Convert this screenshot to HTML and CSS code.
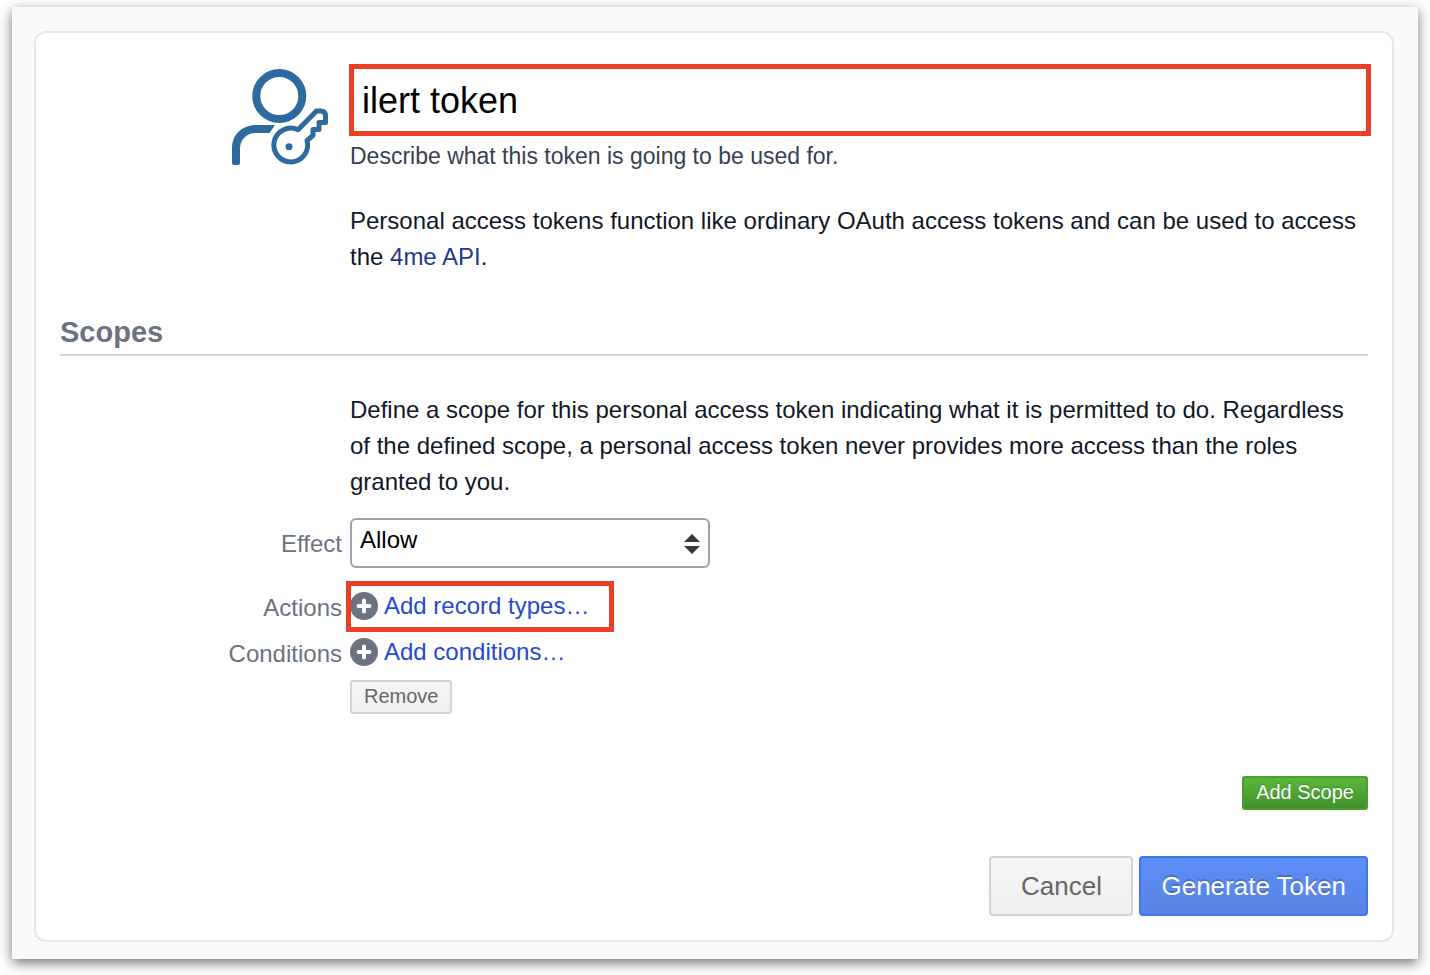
FILE: index.html
```html
<!DOCTYPE html>
<html lang="en">
<head>
<meta charset="utf-8">
<title>Personal access token</title>
<link rel="stylesheet" href="styles.css">
</head>
<body>
<main class="window">
  <form class="card">
    <section class="form-grid intro">
      <svg class="token-icon" viewBox="0 0 98 98" fill="none" stroke="#2d6aa0" aria-hidden="true">
        <circle cx="47.300" cy="28" r="23" stroke-width="8"/>
        <path d="M0 95V80C0 66 11 57 24 57H43L37.500 65H24C14 65 8 72 8 81V95Q8 97 6 97H2Q0 97 0 95Z" fill="#2d6aa0" stroke="none"/>
        <path d="M66 61.800L84.500 43H88.500Q93.500 43 93.500 48V54.500H87V61.500H81V67.500L75 72.500A16.900 16.900 0 1 1 66 61.800Z" stroke-width="5" stroke-linejoin="round"/>
        <circle cx="57" cy="78.700" r="3.500" fill="#2d6aa0" stroke="none"/>
      </svg>
      <div class="field">
        <input class="title-input" type="text" value="ilert token" aria-label="Token description" aria-describedby="token-hint">
        <p class="hint" id="token-hint">Describe what this token is going to be used for.</p>
        <p>Personal access tokens function like ordinary OAuth access tokens and can be used to access the <a class="api-link" href="#">4me API</a>.</p>
      </div>
    </section>
    <h2 class="section-title">Scopes</h2>
    <section class="form-grid">
      <p class="field scope-text">Define a scope for this personal access token indicating what it is permitted to do. Regardless of the defined scope, a personal access token never provides more access than the roles granted to you.</p>
      <label class="label effect-label" for="effect">Effect</label>
      <div class="select-wrap">
        <select class="select" id="effect"><option>Allow</option></select>
        <svg class="select-arrows" viewBox="0 0 16 20" fill="#343a40" aria-hidden="true"><path d="M8 0L16 8H0ZM0 12H16L8 20Z"/></svg>
      </div>
      <span class="label actions-label">Actions</span>
      <a class="add-link highlighted" href="#">
        <svg class="plus" viewBox="0 0 28 28" aria-hidden="true"><circle cx="14" cy="14" r="14" fill="#6b7280"/><path d="M14 8.500V19.500M8.500 14H19.500" stroke="#fff" stroke-width="4" stroke-linecap="round"/></svg>
        Add record types…
      </a>
      <span class="label conditions-label">Conditions</span>
      <a class="add-link" href="#">
        <svg class="plus" viewBox="0 0 28 28" aria-hidden="true"><circle cx="14" cy="14" r="14" fill="#6b7280"/><path d="M14 8.500V19.500M8.500 14H19.500" stroke="#fff" stroke-width="4" stroke-linecap="round"/></svg>
        Add conditions…
      </a>
      <button class="button small remove" type="button">Remove</button>
    </section>
    <div class="scope-actions"><button class="button small green" type="button">Add Scope</button></div>
    <footer class="form-actions">
      <button class="button large" type="button">Cancel</button>
      <button class="button large blue" type="button">Generate Token</button>
    </footer>
  </form>
</main>
</body>
</html>
```
FILE: styles.css
```css
* { box-sizing: border-box; }
body {
  margin: 0;
  padding: 7px 12px 16px;
  background: #fff;
  color: #111827;
  font: 24px/36px "Liberation Sans", Arial, sans-serif;
}
p, h2 { margin: 0; }
a { text-decoration: none; }
.window {
  padding: 24px 24px 17px 22px;
  background: #f9fafc;
  box-shadow: 0 4px 12px rgba(0, 0, 0, .55);
}
.card {
  padding: 31px 24px 24px;
  background: #fff;
  border: 2px solid #e5e7eb;
  border-radius: 12px;
}
.form-grid {
  display: grid;
  grid-template-columns: 282px minmax(0, 1fr);
  column-gap: 8px;
}
.field { grid-column: 2; }
.token-icon {
  width: 98px;
  height: 98px;
  margin-top: 4px;
  margin-right: 12px;
  justify-self: end;
}
.title-input {
  display: block;
  width: calc(100% + 4px);
  height: 72px;
  margin: 0 -3px 0 -1px;
  padding: 2px 8px 0;
  border: 5px solid #ea4027;
  background: #fff;
  color: #000;
  font: inherit;
  font-size: 36px;
}
.hint {
  margin: 2px 0 29px;
  color: #374151;
  font-size: 23px;
}
.api-link { color: #233a8b; }
.section-title {
  margin: 36px 0;
  padding: 2px 0;
  border-bottom: 2px solid #d1d5db;
  color: #6b7280;
  font-size: 29px;
  line-height: 39px;
}
.scope-text { margin-bottom: 18px; }
.label {
  color: #6b7280;
  text-align: right;
}
.effect-label { padding-top: 8px; }
.select-wrap {
  position: relative;
  width: 360px;
  height: 50px;
  margin-bottom: 13px;
}
.select {
  width: 100%;
  height: 100%;
  padding: 0 40px 6px 8px;
  appearance: none;
  border: 2px solid #9ca3af;
  border-radius: 6px;
  background: #fff;
  color: #000;
  font: inherit;
}
.select-arrows {
  position: absolute;
  top: 16px;
  right: 10px;
  width: 16px;
  height: 20px;
  pointer-events: none;
}
.actions-label { padding-top: 9px; }
.conditions-label { padding-top: 4px; }
.add-link {
  display: flex;
  align-items: center;
  gap: 6px;
  justify-self: start;
  height: 40px;
  color: #2549d0;
}
.highlighted {
  width: 268px;
  height: 51px;
  margin-left: -4px;
  padding: 0 4px 1px;
  outline: 5px solid #ea4027;
  outline-offset: -5px;
}
.plus {
  width: 28px;
  height: 28px;
  flex: none;
}
.button {
  border: 2px solid #d4d4d4;
  border-radius: 4px;
  background: linear-gradient(#f5f5f5, #efefef);
  color: #666;
  font: inherit;
}
.small {
  height: 34px;
  padding: 0 12px 2px;
  border-radius: 3px;
  font-size: 20px;
  line-height: 28px;
}
.large {
  height: 60px;
  padding: 0 20px;
  font-size: 26px;
  min-width: 144px;
}
.remove {
  grid-column: 2;
  justify-self: start;
  margin-top: 8px;
}
.green {
  border-color: #49a02f;
  background: linear-gradient(#59b93b, #438f2b);
  color: #fff;
  text-shadow: 0 -1px 1px rgba(0, 0, 0, .2);
}
.blue {
  border-color: #4175e5;
  background: linear-gradient(#5d8ff8, #5884e3);
  color: #fff;
  text-shadow: 0 -2px 0 rgba(0, 0, 0, .2);
}
.scope-actions {
  display: flex;
  justify-content: flex-end;
  margin-top: 62px;
}
.form-actions {
  display: flex;
  justify-content: flex-end;
  gap: 6px;
  margin-top: 46px;
}
```
